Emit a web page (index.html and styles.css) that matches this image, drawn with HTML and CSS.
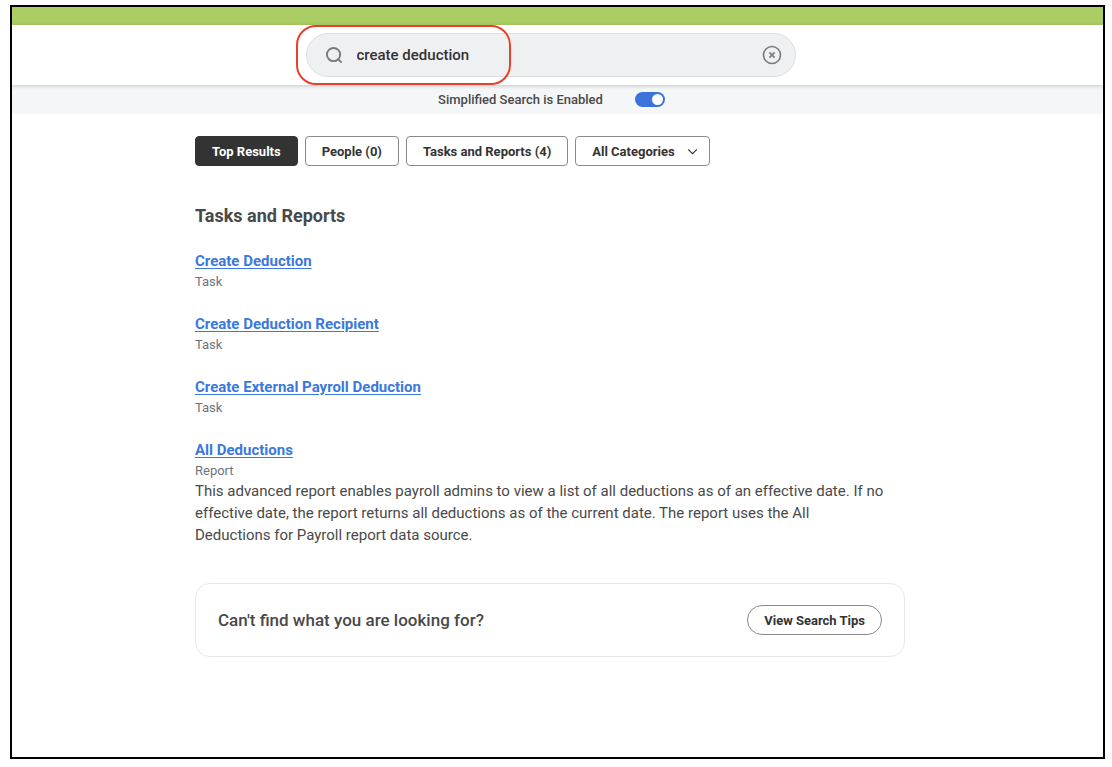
FILE: index.html
```html
<!DOCTYPE html>
<html lang="en">
<head>
<meta charset="utf-8">
<title>Search Results</title>
<link rel="stylesheet" href="styles.css">
</head>
<body>

<div class="window">
    <div class="brand-bar"></div>

    <header class="header">
        <form class="search" role="search">
            <svg class="search-icon" viewBox="0 0 18 18" aria-hidden="true">
                <circle cx="8" cy="8" r="7"/>
                <path d="M13 13l3.5 3.5"/>
            </svg>
            <input type="text" class="search-input" aria-label="Search" value="create deduction">
            <button type="reset" class="clear-btn" aria-label="Clear search">
                <svg viewBox="0 0 20 20" aria-hidden="true">
                    <circle cx="10" cy="10" r="8.5"/>
                    <path d="M7.4 7.4l5.2 5.2M12.6 7.4l-5.2 5.2"/>
                </svg>
            </button>
            <div class="highlight"></div>
        </form>
    </header>

    <div class="mode-bar">
        <label for="simplified">Simplified Search is Enabled</label>
        <input type="checkbox" id="simplified" class="toggle" checked>
    </div>

    <main class="content">
        <div class="filters">
            <button type="button" class="chip active">Top Results</button>
            <button type="button" class="chip">People (0)</button>
            <button type="button" class="chip">Tasks and Reports (4)</button>
            <div class="chip-select">
                <select class="chip" aria-label="Category">
                    <option>All Categories</option>
                </select>
                <svg viewBox="0 0 10 6" aria-hidden="true"><path d="M1 1l4 4 4-4"/></svg>
            </div>
        </div>

        <h2>Tasks and Reports</h2>

        <ul class="results">
            <li>
                <a href="#">Create Deduction</a>
                <div class="type">Task</div>
            </li>
            <li>
                <a href="#">Create Deduction Recipient</a>
                <div class="type">Task</div>
            </li>
            <li>
                <a href="#">Create External Payroll Deduction</a>
                <div class="type">Task</div>
            </li>
            <li>
                <a href="#">All Deductions</a>
                <div class="type">Report</div>
                <p>This advanced report enables payroll admins to view a list of all deductions as of an effective date. If no effective date, the report returns all deductions as of the current date. The report uses the All Deductions for Payroll report data source.</p>
            </li>
        </ul>

        <section class="help">
            <h3>Can't find what you are looking for?</h3>
            <button type="button" class="tips-btn">View Search Tips</button>
        </section>
    </main>
</div>

</body>
</html>
```
FILE: styles.css
```css
* {
    box-sizing: border-box;
}

body {
    margin: 0;
    padding: 5px 7px 8px 10px;
    background: #fff;
    color: #494949;
    font-family: Roboto, "Liberation Sans", sans-serif;
}

button, input, select {
    font-family: inherit;
}

.window {
    min-height: calc(100vh - 13px);
    border: 2px solid #000;
}

.brand-bar {
    height: 18px;
    background: #abce64;
}

.header {
    position: relative;
    display: flex;
    justify-content: center;
    padding: 8px 14px 8px 0;
    background: #fff;
    box-shadow: 0 1px 4px rgba(0,0,0,0.2);
}

.search {
    position: relative;
    display: flex;
    align-items: center;
    width: 100%;
    max-width: 490px;
    height: 44px;
    padding: 0 13px 0 19px;
    border: 1px solid #dddfe2;
    border-radius: 22px;
    background: #eff0f2;
}

.search svg {
    fill: none;
    stroke: #7b7b7b;
    stroke-width: 2;
}

.search-icon {
    flex: none;
    width: 17px;
    height: 17px;
}

.search-input {
    flex: 1;
    min-width: 0;
    padding: 0 14px;
    border: 0;
    outline: 0;
    background: transparent;
    color: #333;
    font-size: 15px;
    font-weight: 500;
}

.clear-btn {
    display: flex;
    padding: 0;
    border: 0;
    background: none;
    cursor: pointer;
}

.clear-btn svg {
    width: 20px;
    height: 20px;
    stroke-width: 1.6;
}

/* callout ring over the typed query */
.highlight {
    position: absolute;
    top: -9px;
    left: -11px;
    width: 215px;
    height: 60px;
    border: 2px solid #e8402a;
    border-radius: 20px;
    pointer-events: none;
}

.mode-bar {
    display: flex;
    align-items: center;
    justify-content: center;
    gap: 32px;
    height: 29px;
    padding-right: 12px;
    background: #f5f6f8;
    font-size: 13px;
    font-weight: 500;
}

.toggle {
    appearance: none;
    width: 30px;
    height: 15px;
    margin: 0;
    padding: 2px;
    border-radius: 8px;
    background: #3b73da;
    cursor: pointer;
}

.toggle::before {
    content: "";
    display: block;
    width: 11px;
    height: 11px;
    border-radius: 50%;
    background: #fff;
}

.toggle:checked::before {
    margin-left: auto;
}

.content {
    max-width: 725px;
    margin: 0 auto;
    padding: 22px 15px 22px 0;
}

.filters {
    display: flex;
    flex-wrap: wrap;
    gap: 7px;
}

.chip {
    height: 30px;
    padding: 0 16px;
    border: 1px solid #8a8a8a;
    border-radius: 4px;
    background: #fff;
    color: #333;
    font-size: 13px;
    font-weight: 700;
    cursor: pointer;
}

.chip.active {
    border-color: #333;
    background: #333;
    color: #fff;
}

.chip-select {
    position: relative;
}

.chip-select .chip {
    appearance: none;
    padding-right: 34px;
}

.chip-select svg {
    position: absolute;
    top: 12px;
    right: 12px;
    width: 11px;
    height: 7px;
    fill: none;
    stroke: #333;
    pointer-events: none;
}

h2 {
    margin: 38px 0 22px;
    font-size: 18px;
    line-height: 24px;
    font-weight: 700;
}

.results {
    margin: 0;
    padding: 0;
    list-style: none;
}

.results li + li {
    margin-top: 22px;
}

.results a {
    display: block;
    width: fit-content;
    color: #3b78de;
    font-size: 15px;
    line-height: 22px;
    font-weight: 700;
    text-underline-offset: 2px;
}

.type {
    color: #6d747c;
    font-size: 13px;
    line-height: 19px;
}

.results p {
    max-width: 690px;
    margin: 0;
    font-size: 15px;
    line-height: 22px;
}

.help {
    display: flex;
    align-items: center;
    justify-content: space-between;
    margin-top: 37px;
    padding: 21px 22px;
    border: 1px solid #e8e8e8;
    border-radius: 15px;
}

h3 {
    margin: 0;
    font-size: 17px;
    font-weight: 500;
}

.tips-btn {
    height: 30px;
    padding: 0 16px;
    border: 1px solid #8a8a8a;
    border-radius: 15px;
    background: #fff;
    color: #333;
    font-size: 13px;
    font-weight: 700;
    cursor: pointer;
}
```
